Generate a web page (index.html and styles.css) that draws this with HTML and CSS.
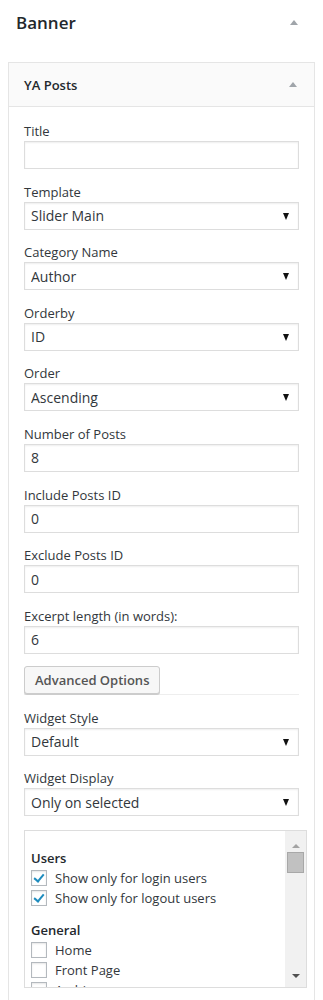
FILE: index.html
```html
<!DOCTYPE html>
<html lang="en">
<head>
    <meta charset="UTF-8">
    <meta name="viewport" content="width=device-width, initial-scale=1.0">
    <title>Banner widgets</title>
    <link rel="stylesheet" href="styles.css">
</head>
<body>
    <div class="sidebar-head">
        <h2>Banner</h2>
        <span class="toggle"></span>
    </div>

    <div class="widget">
        <div class="widget-top">
            <h3>YA Posts</h3>
            <span class="toggle"></span>
        </div>
        <div class="widget-inside">
            <div class="field">
                <label>Title</label>
                <input type="text">
            </div>
            <div class="field">
                <label>Template</label>
                <div class="select"><select><option>Slider Main</option></select></div>
            </div>
            <div class="field">
                <label>Category Name</label>
                <div class="select"><select><option>Author</option></select></div>
            </div>
            <div class="field">
                <label>Orderby</label>
                <div class="select"><select><option>ID</option></select></div>
            </div>
            <div class="field">
                <label>Order</label>
                <div class="select"><select><option>Ascending</option></select></div>
            </div>
            <div class="field">
                <label>Number of Posts</label>
                <input type="text" value="8">
            </div>
            <div class="field">
                <label>Include Posts ID</label>
                <input type="text" value="0">
            </div>
            <div class="field">
                <label>Exclude Posts ID</label>
                <input type="text" value="0">
            </div>
            <div class="field">
                <label>Excerpt length (in words):</label>
                <input type="text" value="6">
            </div>

            <div class="advanced">
                <button>Advanced Options</button>
            </div>

            <div class="field">
                <label>Widget Style</label>
                <div class="select"><select><option>Default</option></select></div>
            </div>
            <div class="field">
                <label>Widget Display</label>
                <div class="select"><select><option>Only on selected</option></select></div>
            </div>

            <div class="checklist">
                <div class="checklist-items">
                    <h4>Users</h4>
                    <label class="check"><input type="checkbox" checked> Show only for login users</label>
                    <label class="check"><input type="checkbox" checked> Show only for logout users</label>
                    <h4>General</h4>
                    <label class="check"><input type="checkbox"> Home</label>
                    <label class="check"><input type="checkbox"> Front Page</label>
                    <label class="check"><input type="checkbox"> Archives</label>
                    <label class="check"><input type="checkbox"> Search</label>
                </div>
                <div class="scrollbar">
                    <span class="arrow-up"></span>
                    <span class="thumb"></span>
                    <span class="arrow-down"></span>
                </div>
            </div>
        </div>
    </div>
</body>
</html>
```

FILE: styles.css
```css
body {
    font-family: "Open Sans", "Liberation Sans", sans-serif;
    background-color: #fff;
    color: #23282d;
    margin: 0;
    padding: 0;
    font-size: 13px;
}
.toggle {
    width: 0;
    height: 0;
    border-left: 4px solid transparent;
    border-right: 4px solid transparent;
    border-bottom: 5px solid #a0a5aa;
}
.sidebar-head {
    display: flex;
    align-items: center;
    justify-content: space-between;
    height: 44px;
    padding: 0 25px 0 16px;
}
.sidebar-head h2 {
    margin: 0;
    font-size: 17px;
    font-weight: 600;
    color: #23282d;
}
.widget {
    margin: 18px 8px 0 8px;
    border: 1px solid #e5e5e5;
    background: #fff;
}
.widget-top {
    display: flex;
    align-items: center;
    justify-content: space-between;
    height: 43px;
    padding: 0 17px 0 15px;
    background: #fafafa;
    border-bottom: 1px solid #e5e5e5;
}
.widget-top h3 {
    margin: 0;
    font-size: 13px;
    font-weight: 600;
    color: #23282d;
}
.widget-inside {
    padding: 15px 15px 20px 15px;
}
.field {
    margin-bottom: 13.6px;
}
.field label {
    display: block;
    line-height: 18px;
    margin-bottom: 1px;
    color: #32373c;
}
.field input, .select select {
    box-sizing: border-box;
    width: 100%;
    height: 28px;
    margin: 0;
    padding: 0 6px;
    border: 1px solid #ddd;
    box-shadow: inset 0 1px 2px rgba(0, 0, 0, 0.07);
    background: #fff;
    font-family: inherit;
    font-size: 14px;
    color: #32373c;
    border-radius: 0;
    outline: none;
}
.select {
    position: relative;
}
.select select {
    appearance: none;
    -webkit-appearance: none;
    padding-left: 6px;
}
.select::after {
    content: "";
    position: absolute;
    right: 10px;
    top: 11px;
    border-left: 3.5px solid transparent;
    border-right: 3.5px solid transparent;
    border-top: 7px solid #111;
    pointer-events: none;
}
.advanced {
    margin: -1.6px 0 14px 0;
    border-bottom: 1px solid #eee;
    display: flex;
}
.advanced button {
    height: 28px;
    padding: 0 10px;
    border: 1px solid #ccc;
    border-radius: 3px;
    background: #f7f7f7;
    box-shadow: 0 1px 0 #ccc;
    font-family: inherit;
    font-size: 13px;
    font-weight: 600;
    color: #555;
    margin-bottom: 0;
}
.checklist {
    display: flex;
    height: 156px;
    margin: 0 -8px 0 0;
    border: 1px solid #ddd;
    overflow: hidden;
}
.checklist-items {
    flex: 1;
    padding: 18px 6px 0 6px;
}
.checklist-items h4 {
    margin: 0;
    font-size: 13px;
    font-weight: 600;
    line-height: 18px;
    color: #23282d;
}
.checklist-items h4 + .check {
    margin-top: 1px;
}
.check + h4 {
    margin-top: 13px;
}
.check {
    display: flex;
    align-items: center;
    height: 20px;
    color: #32373c;
}
.check input {
    appearance: none;
    -webkit-appearance: none;
    box-sizing: border-box;
    width: 16px;
    height: 16px;
    margin: 0 8px 0 0;
    border: 1px solid #b4b9be;
    background: #fff;
    box-shadow: inset 0 1px 2px rgba(0, 0, 0, 0.1);
    position: relative;
}
.check input:checked::after {
    content: "";
    position: absolute;
    left: 4px;
    top: 1px;
    width: 4px;
    height: 8px;
    border-right: 2.5px solid #1e8cbe;
    border-bottom: 2.5px solid #1e8cbe;
    transform: rotate(40deg);
}
.scrollbar {
    width: 21px;
    background: #f1f1f1;
    display: flex;
    flex-direction: column;
    align-items: center;
}
.arrow-up {
    margin-top: 13px;
    border-left: 4px solid transparent;
    border-right: 4px solid transparent;
    border-bottom: 4px solid #a3a3a3;
}
.thumb {
    margin-top: 4px;
    width: 17px;
    height: 21px;
    box-sizing: border-box;
    background: #c1c1c1;
    border: 1px solid #a8a8a8;
}
.arrow-down {
    margin-top: auto;
    margin-bottom: 9px;
    border-left: 4px solid transparent;
    border-right: 4px solid transparent;
    border-top: 4px solid #505050;
}
```
